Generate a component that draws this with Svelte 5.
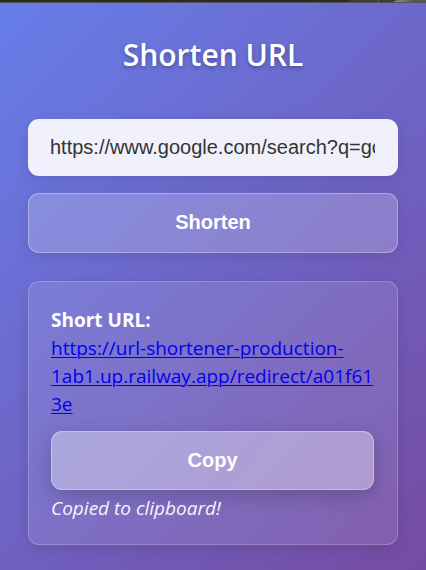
<script lang="ts">
  let url = $state('https://www.google.com/search?q=google+url+shortener');
  const shortUrl = 'https://url-shortener-production-1ab1.up.railway.app/redirect/a01f613e';
</script>

<div class="page">
  <div class="chrome" aria-hidden="true"><i></i><b></b></div>
  <main>
    <h1>Shorten URL</h1>
    <form onsubmit={(e) => e.preventDefault()}>
      <input type="text" aria-label="URL to shorten" bind:value={url} />
      <button type="submit">Shorten</button>
    </form>
    <section class="result">
      <strong>Short URL:</strong>
      <a href={shortUrl}>{shortUrl}</a>
      <button type="button" class="copy">Copy</button>
      <em>Copied to clipboard!</em>
    </section>
  </main>
</div>

<style>
  :global(body) {
    margin: 0;
  }
  .page {
    min-height: 100vh;
    box-sizing: border-box;
    display: flex;
    flex-direction: column;
    background: linear-gradient(135deg, #667eea 0%, #764ba2 100%);
    color: #fff;
    font-family: 'Segoe UI', 'Open Sans', 'Noto Sans', sans-serif;
    font-size: 19px;
    line-height: 28px;
  }
  .chrome {
    height: 3px;
    box-sizing: border-box;
    display: flex;
    justify-content: flex-end;
    gap: 15px;
    border-bottom: 1px solid #55554f;
    background: linear-gradient(90deg, #292929 81%, #3c3c3a 83%);
  }
  .chrome i {
    width: 1px;
    background: #5c5c5a;
  }
  .chrome b {
    width: 32px;
    border-top-left-radius: 8px 2px;
    background: linear-gradient(90deg, #999, #555 60%);
  }
  main {
    padding: 32px 28px 24px;
  }
  h1 {
    margin: 0 0 44px;
    text-align: center;
    font-size: 30px;
    line-height: 40px;
    font-weight: 600;
    text-shadow: 0 2px 4px rgba(0, 0, 0, 0.3);
  }
  form {
    display: flex;
    flex-direction: column;
    gap: 17px;
    margin-bottom: 28px;
  }
  input,
  button {
    width: 100%;
    box-sizing: border-box;
    margin: 0;
    border-radius: 11px;
    font-family: 'Liberation Sans', Arial, sans-serif;
    font-size: 20px;
    line-height: 24px;
  }
  input {
    height: 57px;
    padding: 0 23px 0 22px;
    border: 0;
    outline: 0;
    background: rgba(255, 255, 255, 0.9);
    color: #333;
    box-shadow: 0 4px 15px rgba(0, 0, 0, 0.1);
  }
  button {
    height: 60px;
    padding: 0 23px 2px;
    border: 1px solid rgba(255, 255, 255, 0.3);
    background: rgba(255, 255, 255, 0.2);
    color: #fff;
    font-weight: 700;
    box-shadow: 0 4px 15px rgba(0, 0, 0, 0.1);
  }
  .result {
    display: flex;
    flex-direction: column;
    padding: 24px 23px 22px 22px;
    border: 1px solid rgba(255, 255, 255, 0.2);
    border-radius: 11px;
    background: rgba(255, 255, 255, 0.1);
    box-shadow: 0 4px 15px rgba(0, 0, 0, 0.1);
  }
  strong {
    font-weight: 700;
  }
  a {
    color: #0000ee;
    overflow-wrap: anywhere;
    text-underline-offset: 2px;
    text-decoration-thickness: 1px;
  }
  .copy {
    height: 59px;
    margin: 13px 0 4px;
    border-color: rgba(255, 255, 255, 0.3);
    background: rgba(255, 255, 255, 0.36);
    box-shadow: 0 6px 20px rgba(0, 0, 0, 0.2);
  }
  em {
    color: rgba(255, 255, 255, 0.95);
  }
</style>
